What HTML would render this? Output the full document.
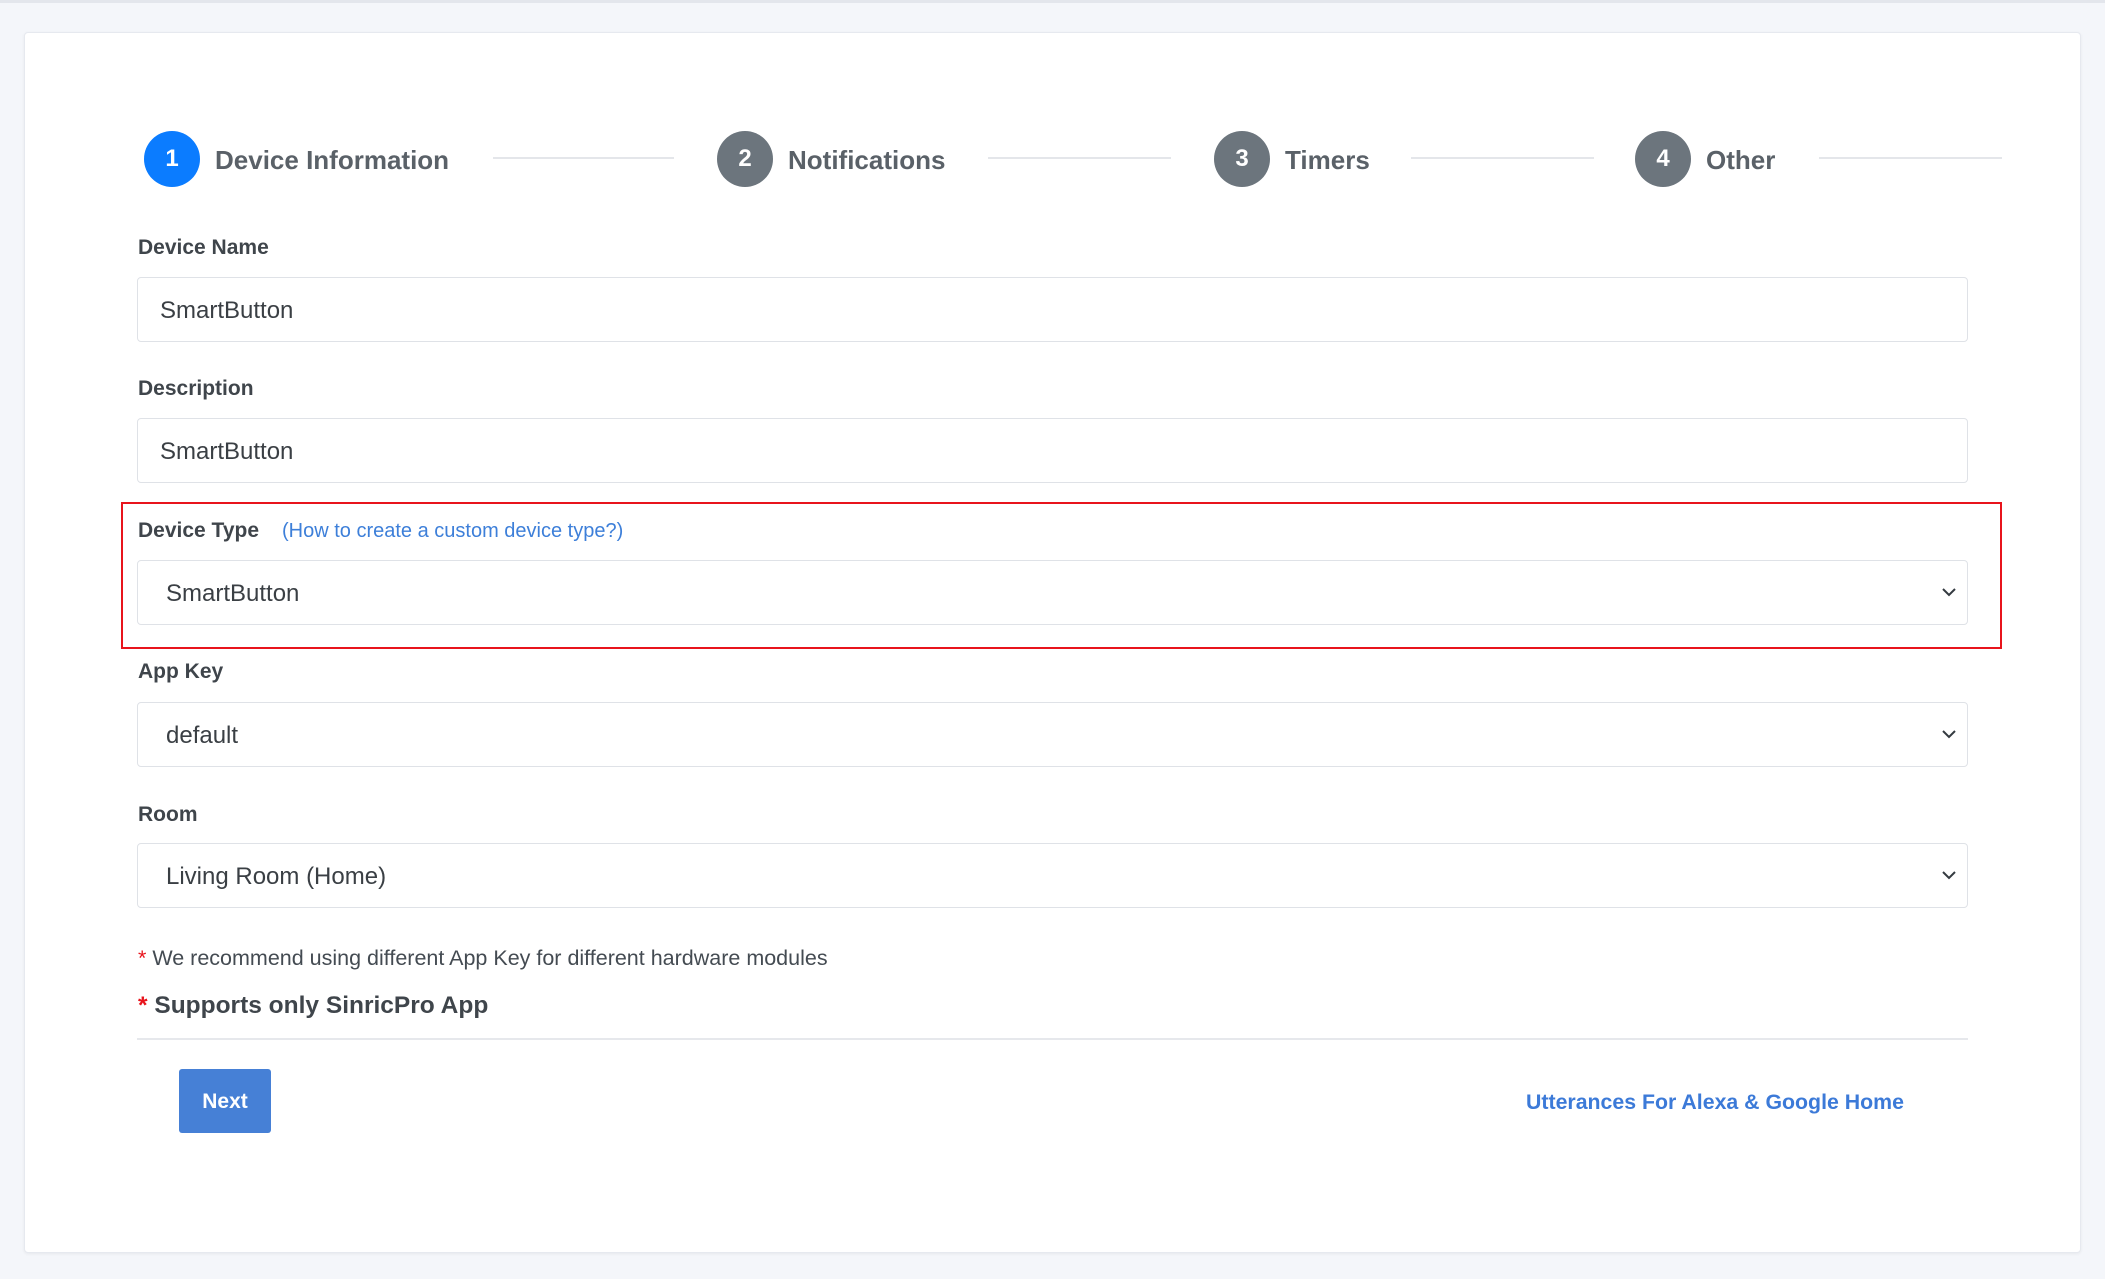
<!DOCTYPE html>
<html><head><meta charset="utf-8"><style>
*{margin:0;padding:0;box-sizing:border-box}
body{width:2105px;height:1279px;background:#f4f6fa;font-family:"Liberation Sans",sans-serif;position:relative;overflow:hidden;color:#444b52}
.topline{position:absolute;left:0;top:0;width:2105px;height:3px;background:#e3e6ec}
.card{position:absolute;left:24px;top:32px;width:2057px;height:1221px;background:#fff;border:1px solid #e6e9ef;border-radius:4px;box-shadow:0 1px 3px rgba(0,0,0,.06)}
.a{position:absolute}
.circ{position:absolute;width:56px;height:56px;border-radius:50%;color:#fff;font-weight:bold;font-size:24px;line-height:56px;text-align:center;top:131px}
.step{position:absolute;top:145px;font-size:26px;font-weight:bold;color:#5a6168;line-height:30px}
.ln{position:absolute;top:157px;height:2px;background:#e4e6ea}
.lbl{position:absolute;left:138px;font-size:21px;font-weight:bold;color:#3f454b;line-height:24px}
.inp{position:absolute;left:137px;width:1831px;height:65px;border:1px solid #dfe2e7;border-radius:4px;background:#fff;font-size:24px;color:#3a3f44;line-height:65px;padding-left:22px}
.sel{padding-left:28px}
.chev{position:absolute;right:10px;top:25px}
</style></head><body>
<div class="topline"></div>
<div class="card"></div>

<div class="circ" style="left:144px;background:#0b7cff">1</div>
<div class="step" style="left:215px">Device Information</div>
<div class="ln" style="left:493px;width:181px"></div>
<div class="circ" style="left:717px;background:#6c757d">2</div>
<div class="step" style="left:788px">Notifications</div>
<div class="ln" style="left:988px;width:183px"></div>
<div class="circ" style="left:1214px;background:#6c757d">3</div>
<div class="step" style="left:1285px">Timers</div>
<div class="ln" style="left:1411px;width:183px"></div>
<div class="circ" style="left:1635px;background:#6c757d">4</div>
<div class="step" style="left:1706px">Other</div>
<div class="ln" style="left:1819px;width:183px"></div>

<div class="lbl" style="top:236px">Device Name</div>
<div class="inp" style="top:277px">SmartButton</div>
<div class="lbl" style="top:377px">Description</div>
<div class="inp" style="top:418px">SmartButton</div>

<div class="a" style="left:121px;top:502px;width:1881px;height:147px;border:2px solid #e8141c"></div>
<div class="lbl" style="top:519px">Device Type</div>
<div class="a" style="left:282px;top:519px;font-size:20px;color:#3d7fd9;line-height:24px">(How to create a custom device type?)</div>
<div class="inp sel" style="top:560px">SmartButton<svg class="chev" width="16" height="12" viewBox="0 0 16 12"><path d="M2 3l6 6 6-6" fill="none" stroke="#343a40" stroke-width="2"/></svg></div>

<div class="lbl" style="top:660px">App Key</div>
<div class="inp sel" style="top:702px">default<svg class="chev" width="16" height="12" viewBox="0 0 16 12"><path d="M2 3l6 6 6-6" fill="none" stroke="#343a40" stroke-width="2"/></svg></div>

<div class="lbl" style="top:803px">Room</div>
<div class="inp sel" style="top:843px">Living Room (Home)<svg class="chev" width="16" height="12" viewBox="0 0 16 12"><path d="M2 3l6 6 6-6" fill="none" stroke="#343a40" stroke-width="2"/></svg></div>

<div class="a" style="left:138px;top:946px;font-size:21.5px;color:#444b52;line-height:24px"><span style="color:#e8141c">*</span> We recommend using different App Key for different hardware modules</div>
<div class="a" style="left:138px;top:991px;font-size:24.5px;font-weight:bold;color:#3f454b;line-height:30px"><span style="color:#e8141c">*</span> Supports only SinricPro App</div>
<div class="a" style="left:137px;top:1038px;width:1831px;height:2px;background:#e6e8ec"></div>

<div class="a" style="left:179px;top:1069px;width:92px;height:64px;background:#4680d6;border-radius:3px;color:#fff;font-weight:bold;font-size:21px;line-height:66px;text-align:center">Next</div>
<div class="a" style="left:1526px;top:1089px;font-size:21.3px;font-weight:bold;color:#3c7ad8;line-height:26px">Utterances For Alexa &amp; Google Home</div>
</body></html>
